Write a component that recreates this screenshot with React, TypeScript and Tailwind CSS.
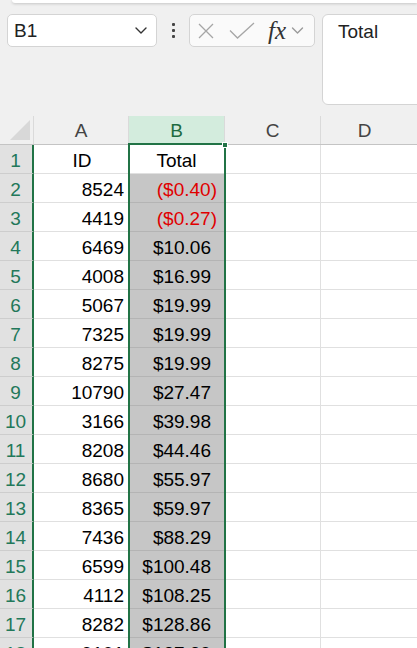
import React from "react";

const rows: [string, string, string][] = [
  ["1", "ID", "Total"],
  ["2", "8524", "($0.40)"],
  ["3", "4419", "($0.27)"],
  ["4", "6469", "$10.06"],
  ["5", "4008", "$16.99"],
  ["6", "5067", "$19.99"],
  ["7", "7325", "$19.99"],
  ["8", "8275", "$19.99"],
  ["9", "10790", "$27.47"],
  ["10", "3166", "$39.98"],
  ["11", "8208", "$44.46"],
  ["12", "8680", "$55.97"],
  ["13", "8365", "$59.97"],
  ["14", "7436", "$88.29"],
  ["15", "6599", "$100.48"],
  ["16", "4112", "$108.25"],
  ["17", "8282", "$128.86"],
  ["18", "9101", "$137.39"],
];

function Chevron({ className }: { className?: string }) {
  return (
    <svg viewBox="0 0 12 7" className={className} fill="none">
      <path d="M1 1l5 5 5-5" stroke="currentColor" strokeWidth="1.4" strokeLinecap="round" strokeLinejoin="round" />
    </svg>
  );
}

export default function App() {
  return (
    <div className="relative w-[417px] h-[648px] overflow-hidden bg-[#f0f0f0] font-['Liberation_Sans',Arial,sans-serif] text-black">
      {/* ribbon bottom edge */}
      <div className="ml-[12px] h-[3px] bg-white rounded-bl-[6px] shadow-[0_1px_3px_rgba(0,0,0,0.18)]" />

      {/* formula toolbar */}
      <div className="mt-[11px] flex items-start h-[91px] overflow-hidden">
        <div className="shrink-0 ml-[7px] w-[150px] h-[33px] bg-white border border-[#d4d4d4] rounded-[5px] flex items-center pl-[6px] pr-[9px]">
          <span className="text-[19px] text-[#222] flex-1 leading-none">B1</span>
          <Chevron className="w-[12px] h-[7px] text-[#333]" />
        </div>
        <div className="shrink-0 w-[32px] h-[33px] flex flex-col items-center justify-center gap-[3px]">
          <div className="w-[3px] h-[3px] bg-[#444] rounded-[1px]" />
          <div className="w-[3px] h-[3px] bg-[#444] rounded-[1px]" />
          <div className="w-[3px] h-[3px] bg-[#444] rounded-[1px]" />
        </div>
        <div className="shrink-0 w-[126px] h-[33px] bg-[#fafafa] border border-[#d4d4d4] rounded-[5px] flex items-center pl-[8px]">
          <svg viewBox="0 0 16 16" className="w-[16px] h-[16px]" fill="none">
            <path d="M1 1l14 14M15 1L1 15" stroke="#a6a6a6" strokeWidth="1.3" />
          </svg>
          <svg viewBox="0 0 26 17" className="ml-[15px] w-[26px] h-[17px]" fill="none">
            <path d="M1 8.5l7.5 7.5L25 1" stroke="#a6a6a6" strokeWidth="1.3" />
          </svg>
          <span className="ml-[13px] font-['Liberation_Serif',serif] italic text-[25px] leading-none text-[#333]">fx</span>
          <Chevron className="ml-[5px] w-[13px] h-[7px] text-[#9a9a9a]" />
        </div>
        <div className="shrink-0 ml-[7px] w-[110px] h-[91px] bg-white border border-[#d4d4d4] rounded-[6px] pl-[15px] pt-[3px]">
          <span className="text-[19px] text-[#222]">Total</span>
        </div>
      </div>

      {/* grid */}
      <div className="relative mt-[11px]">
        {/* header row */}
        <div className="flex h-[29px] border-b border-[#c4c4c4] bg-[#f0f0f0] text-[19px] text-[#444]">
          <div className="relative w-[34px] h-full border-r border-[#dadada]">
            <svg viewBox="0 0 20 20" className="absolute left-[10px] top-[4px] w-[20px] h-[20px]">
              <path d="M20 0V20H0Z" fill="#d8d8d8" />
            </svg>
          </div>
          <div className="w-[95px] h-full border-r border-[#dadada] flex items-center justify-center pt-[2px]">A</div>
          <div className="w-[96px] h-full bg-[#d3ecdd] border-r border-[#dadada] flex items-center justify-center pt-[2px] text-[#1d6b40]">B</div>
          <div className="w-[96px] h-full border-r border-[#dadada] flex items-center justify-center pt-[2px]">C</div>
          <div className="flex-1 h-full flex items-center justify-center pt-[2px] pr-[9px]">D</div>
        </div>

        {rows.map(([n, a, b], i) => {
          const neg = b.startsWith("(");
          const isHeader = i === 0;
          return (
            <div key={n} className="flex h-[29px] text-[19px]">
              <div className="w-[34px] h-full bg-[#e1e1e1] border-b border-[#cdcdcd] border-r-2 border-r-[#217346] text-[#22785a] text-center pt-[4px] leading-[24px] pr-[1px]">
                {n}
              </div>
              <div className={`w-[95px] h-full bg-white border-b border-r border-[#e0e0e0] pt-[4px] leading-[24px] ${isHeader ? "text-center pl-[2px]" : "text-right pr-[4px]"}`}>
                {a}
              </div>
              <div
                className={`w-[96px] h-full border-b border-r border-[#e0e0e0] pt-[4px] leading-[24px] ${
                  isHeader ? "bg-white text-center" : "bg-[#c6c6c6] border-b-[#b4b4b4] text-right"
                } ${neg ? "text-[#e00000] pr-[7px]" : isHeader ? "" : "pr-[13px]"}`}
              >
                {b}
              </div>
              <div className="w-[96px] h-full bg-white border-b border-r border-[#e0e0e0]" />
              <div className="flex-1 h-full bg-white border-b border-[#e0e0e0]" />
            </div>
          );
        })}

        {/* selection outline for column B */}
        <div className="absolute left-[128px] top-[27px] w-[98px] h-[600px] border-2 border-[#217346] pointer-events-none" />
        <div className="absolute left-[222px] top-[26px] w-[6px] h-[6px] bg-[#217346] border border-white pointer-events-none" />
      </div>
    </div>
  );
}
